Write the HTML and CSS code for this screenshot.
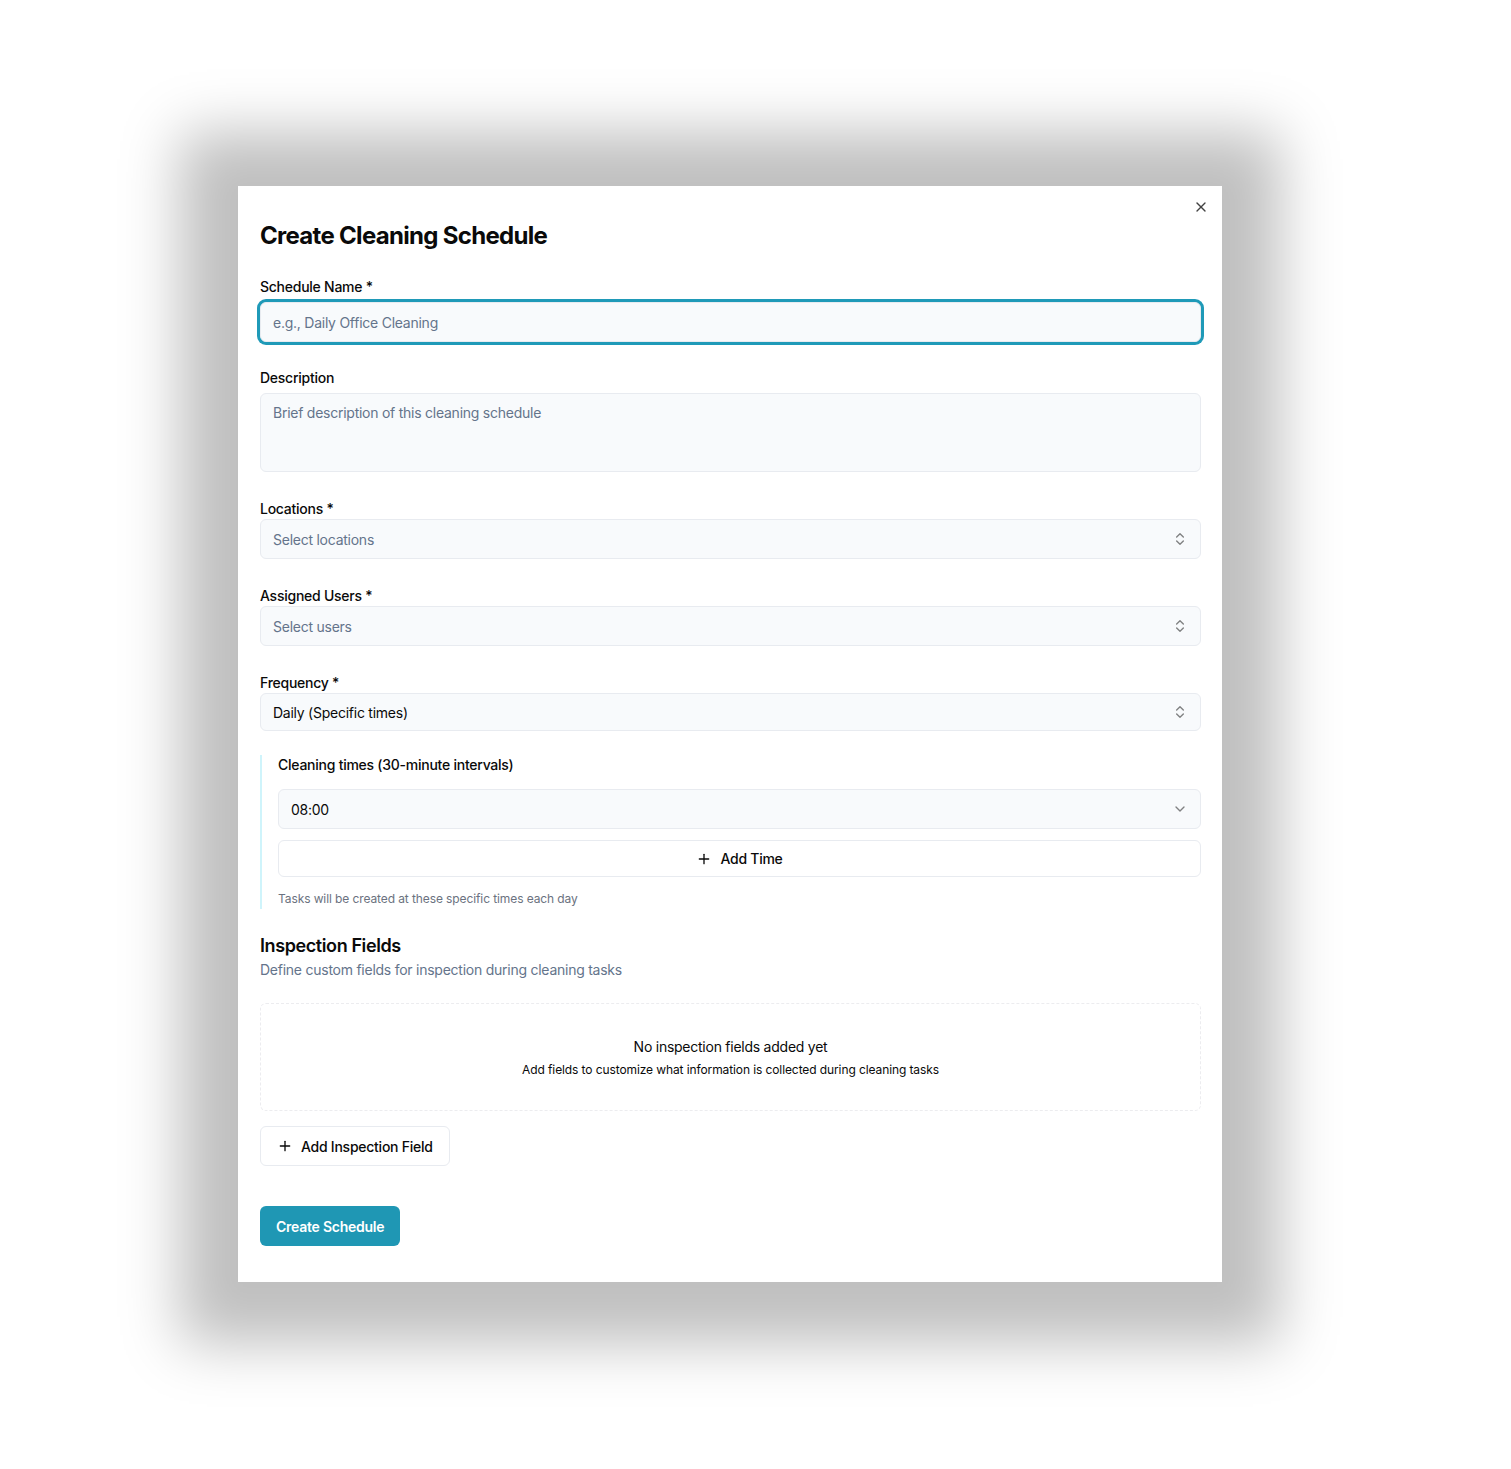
FILE: index.html
```html
<!DOCTYPE html>
<html lang="en">
<head>
<meta charset="utf-8">
<title>Create Cleaning Schedule</title>
<link rel="stylesheet" href="styles.css">
</head>
<body>
<div class="page">
  <div class="modal">
    <button class="close" aria-label="Close">
      <svg width="16" height="16" viewBox="0 0 24 24" fill="none" stroke="currentColor" stroke-width="2" stroke-linecap="round" stroke-linejoin="round"><path d="M18 6 6 18"/><path d="m6 6 12 12"/></svg>
    </button>
    <h2 class="title">Create Cleaning Schedule</h2>

    <div class="field f-name">
      <label class="label">Schedule Name *</label>
      <div class="input focused"><span class="ph">e.g., Daily Office Cleaning</span></div>
    </div>

    <div class="field f-desc">
      <label class="label">Description</label>
      <div class="textarea"><span class="ph">Brief description of this cleaning schedule</span></div>
    </div>

    <div class="field f-sel">
      <label class="label">Locations *</label>
      <div class="select"><span class="ph">Select locations</span>
        <svg class="chev" width="16" height="16" viewBox="0 0 24 24" fill="none" stroke="currentColor" stroke-width="2" stroke-linecap="round" stroke-linejoin="round"><path d="m7 15 5 5 5-5"/><path d="m7 9 5-5 5 5"/></svg>
      </div>
    </div>

    <div class="field f-sel">
      <label class="label">Assigned Users *</label>
      <div class="select"><span class="ph">Select users</span>
        <svg class="chev" width="16" height="16" viewBox="0 0 24 24" fill="none" stroke="currentColor" stroke-width="2" stroke-linecap="round" stroke-linejoin="round"><path d="m7 15 5 5 5-5"/><path d="m7 9 5-5 5 5"/></svg>
      </div>
    </div>

    <div class="field f-sel">
      <label class="label">Frequency *</label>
      <div class="select short"><span class="val">Daily (Specific times)</span>
        <svg class="chev" width="16" height="16" viewBox="0 0 24 24" fill="none" stroke="currentColor" stroke-width="2" stroke-linecap="round" stroke-linejoin="round"><path d="m7 15 5 5 5-5"/><path d="m7 9 5-5 5 5"/></svg>
      </div>
    </div>

    <div class="times">
      <div class="label">Cleaning times (30-minute intervals)</div>
      <div class="select time"><span class="val">08:00</span>
        <svg class="chev" width="16" height="16" viewBox="0 0 24 24" fill="none" stroke="currentColor" stroke-width="2" stroke-linecap="round" stroke-linejoin="round"><path d="m6 9 6 6 6-6"/></svg>
      </div>
      <button class="btn-outline wide">
        <svg width="16" height="16" viewBox="0 0 24 24" fill="none" stroke="currentColor" stroke-width="2" stroke-linecap="round" stroke-linejoin="round"><path d="M5 12h14"/><path d="M12 5v14"/></svg>
        <span>Add Time</span>
      </button>
      <p class="hint">Tasks will be created at these specific times each day</p>
    </div>

    <div class="inspect">
      <h3 class="sub-title">Inspection Fields</h3>
      <p class="sub-desc">Define custom fields for inspection during cleaning tasks</p>
      <div class="empty">
        <p class="empty-title">No inspection fields added yet</p>
        <p class="empty-desc">Add fields to customize what information is collected during cleaning tasks</p>
      </div>
      <button class="btn-outline add-field">
        <svg width="16" height="16" viewBox="0 0 24 24" fill="none" stroke="currentColor" stroke-width="2" stroke-linecap="round" stroke-linejoin="round"><path d="M5 12h14"/><path d="M12 5v14"/></svg>
        <span>Add Inspection Field</span>
      </button>
    </div>

    <button class="btn-primary">Create Schedule</button>
  </div>
</div>
</body>
</html>
```

FILE: styles.css
```css
* { box-sizing: border-box; }
html, body { margin: 0; padding: 0; background: #ffffff; }
body {
  font-family: Inter, "Noto Sans", "Liberation Sans", sans-serif;
  color: #0a0a0a;
  letter-spacing: -0.25px;
  -webkit-font-smoothing: antialiased;
}
.page {
  padding: 186px 0 187px 238px;
}
.modal {
  position: relative;
  width: 984px;
  background: #ffffff;
  padding: 34px 21px 36px 22px;
  box-shadow: 0 4px 55px 58px rgba(0, 0, 0, 0.25);
  display: flex;
  flex-direction: column;
  align-items: flex-start;
}
.close {
  position: absolute;
  top: 13px;
  right: 13px;
  width: 16px;
  height: 16px;
  padding: 0;
  border: 0;
  background: none;
  color: #222;
  opacity: 0.85;
  display: flex;
}
.title {
  margin: 0;
  font-size: 24px;
  line-height: 32px;
  font-weight: 700;
  letter-spacing: -0.7px;
}
.field { width: 100%; display: flex; flex-direction: column; }
.label {
  font-size: 14px;
  line-height: 20px;
  font-weight: 500;
  color: #0a0a0a;
}
.f-name { margin-top: 25px; }
.f-name .label { margin-bottom: 5px; }
.f-desc { margin-top: 26px; }
.f-desc .label { margin-bottom: 5px; }
.f-sel { margin-top: 27px; }
.f-sel + .f-sel { margin-top: 27px; }
.f-sel .label { margin-bottom: 0; }

.input, .textarea, .select {
  width: 100%;
  background: #f8fafc;
  border: 1px solid #e8ebf0;
  border-radius: 6px;
  font-size: 14px;
  color: #0a0a0a;
}
.input {
  height: 40px;
  padding: 0 12px;
  display: flex;
  align-items: center;
}
.input.focused {
  box-shadow: 0 0 0 3px #1f9ab8;
}
.textarea {
  height: 79px;
  padding: 9px 12px;
  line-height: 20px;
}
.ph { color: #64748b; }
.val { color: #0a0a0a; }
.select {
  height: 40px;
  padding: 0 12px 0 12px;
  display: flex;
  align-items: center;
  justify-content: space-between;
}
.select.short { height: 38px; }
.chev { color: #0a0a0a; opacity: 0.5; flex: none; }

.times {
  width: 100%;
  margin-top: 24px;
  border-left: 2px solid #cff4fb;
  padding: 0 0 2px 16px;
  display: flex;
  flex-direction: column;
}
.times .label { margin-bottom: 14px; }
.btn-outline {
  font-family: inherit;
  font-size: 14px;
  font-weight: 500;
  letter-spacing: -0.25px;
  color: #0a0a0a;
  background: #ffffff;
  border: 1px solid #e8ebf0;
  border-radius: 6px;
  display: flex;
  align-items: center;
  justify-content: center;
  gap: 8px;
  cursor: pointer;
}
.btn-outline.wide {
  margin-top: 11px;
  height: 37px;
  width: 100%;
}
.hint {
  margin: 14px 0 0;
  font-size: 12px;
  line-height: 16px;
  letter-spacing: -0.1px;
  color: #6b7280;
}

.inspect {
  width: 100%;
  margin-top: 23px;
  display: flex;
  flex-direction: column;
  align-items: flex-start;
}
.sub-title {
  margin: 0;
  font-size: 18px;
  line-height: 28px;
  font-weight: 600;
  letter-spacing: -0.4px;
}
.sub-desc {
  margin: 0;
  font-size: 14px;
  line-height: 20px;
  color: #64748b;
}
.empty {
  width: 100%;
  margin-top: 23px;
  height: 108px;
  border: 1px dashed #ececef;
  border-radius: 6px;
  display: flex;
  flex-direction: column;
  align-items: center;
  justify-content: center;
  gap: 5px;
}
.empty p { margin: 0; }
.empty-title { font-size: 14px; line-height: 20px; color: #0a0a0a; }
.empty-desc { font-size: 12px; line-height: 16px; letter-spacing: -0.1px; color: #0a0a0a; }
.add-field {
  margin-top: 15px;
  height: 40px;
  padding: 0 16px 0 16px;
  gap: 8px;
}
.btn-primary {
  margin-top: 40px;
  height: 40px;
  padding: 0 16px;
  font-family: inherit;
  font-size: 14px;
  font-weight: 600;
  letter-spacing: -0.25px;
  color: #ffffff;
  background: #1f97b4;
  border: 0;
  border-radius: 6px;
  cursor: pointer;
}
```
